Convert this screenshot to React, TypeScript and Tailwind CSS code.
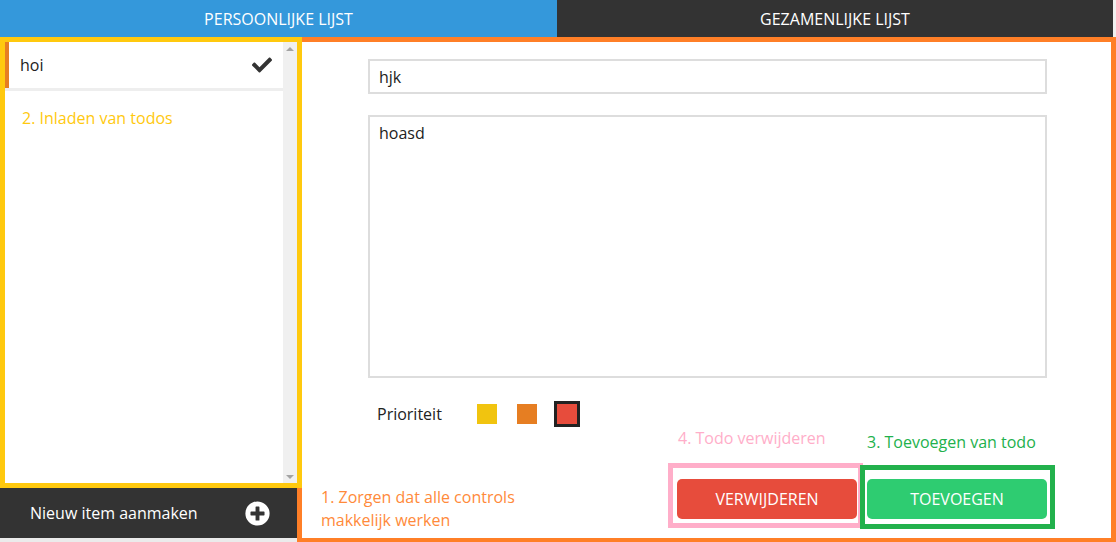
import React from 'react';
import { FaCheck, FaPlusCircle } from 'react-icons/fa';

const App = () => {
  return (
    <div className="w-[1116px] h-[542px] overflow-hidden bg-white font-['Open_Sans',sans-serif]">
      {/* tabs */}
      <div className="flex h-[37px] text-[16px] text-white">
        <div className="w-[557px] bg-[#3498db] flex items-center justify-center">PERSOONLIJKE LIJST</div>
        <div className="flex-1 bg-[#333] flex items-center justify-center">GEZAMENLIJKE LIJST</div>
        <div className="w-[3px] bg-[#f0f0f0]" />
      </div>

      <div className="flex h-[506px]">
        {/* sidebar */}
        <div className="w-[297px] shrink-0 flex flex-col">
          <div className="relative z-10 w-[302px] h-[451px] shrink-0 border-[5px] border-[#ffc90e] bg-white flex">
            <div className="flex-1">
              <div className="border-b-[3px] border-[#eee]">
                <div className="h-[46px] flex items-center justify-between border-l-4 border-[#e67e22] pl-[11px] pr-[11px] text-[16px] text-[#222]">
                  <span>hoi</span>
                  <FaCheck size={20} color="#333" />
                </div>
              </div>
              <div className="pl-[17px] mt-[17px] text-[16px] leading-[20px] text-[#ffc90e]">2. Inladen van todos</div>
            </div>
            <div className="w-[14px] bg-[#f0f0f0] flex flex-col justify-between items-center pt-[5px] pb-[4px]">
              <div className="w-0 h-0 border-x-[4px] border-x-transparent border-b-[4px] border-b-[#a3a3a3]" />
              <div className="w-0 h-0 border-x-[4px] border-x-transparent border-t-[4px] border-t-[#a3a3a3]" />
            </div>
          </div>
          <div className="h-[50px] shrink-0 bg-[#333] flex items-center justify-between pl-[30px] pr-[27px] text-white text-[16px]">
            <span>Nieuw item aanmaken</span>
            <FaPlusCircle size={25} color="#fff" />
          </div>
          <div className="flex-1 bg-[#ebebeb]" />
        </div>

        {/* detail panel */}
        <div className="relative flex-1 border-[5px] border-[#ff7f27] flex flex-col pl-[66px] pr-[64px] pt-[17px]">
          <input
            defaultValue="hjk"
            className="h-[35px] border-2 border-[#ddd] px-[9px] text-[16px] text-[#222] outline-none"
          />
          <textarea
            defaultValue="hoasd"
            className="mt-[21px] h-[263px] border-2 border-[#ddd] px-[9px] pt-[5px] text-[16px] leading-[22px] text-[#222] outline-none resize-none"
          />
          <div className="mt-[23px] h-[26px] flex items-center pl-[9px] text-[16px] text-[#222]">
            <span>Prioriteit</span>
            <div className="ml-[35px] w-[20px] h-[20px] bg-[#f1c40f]" />
            <div className="ml-[20px] w-[20px] h-[20px] bg-[#e67e22]" />
            <div className="ml-[17px] w-[26px] h-[26px] bg-[#e74c3c] border-[3px] border-[#222]" />
          </div>
          <div className="mt-[52px] flex justify-end gap-[10px]">
            <button className="w-[180px] h-[40px] rounded-[5px] bg-[#e74c3c] text-white text-[16px]">VERWIJDEREN</button>
            <button className="w-[180px] h-[40px] rounded-[5px] bg-[#2ecc71] text-white text-[16px]">TOEVOEGEN</button>
          </div>

          {/* annotations */}
          <div className="absolute left-[19px] top-[444px] text-[16px] leading-[23px] text-[#ff8a3a]">
            1. Zorgen dat alle controls
            <br />
            makkelijk werken
          </div>
          <div className="absolute left-[376px] top-[386px] text-[16px] leading-[20px] text-[#ffaec9]">4. Todo verwijderen</div>
          <div className="absolute left-[565px] top-[390px] text-[16px] leading-[20px] text-[#22b14c]">3. Toevoegen van todo</div>
          <div className="absolute left-[366px] top-[421px] w-[195px] h-[65px] border-[5px] border-[#ffaec9]" />
          <div className="absolute left-[558px] top-[423px] w-[195px] h-[64px] border-[5px] border-[#22b14c]" />
        </div>
      </div>
    </div>
  );
};

export default App;
